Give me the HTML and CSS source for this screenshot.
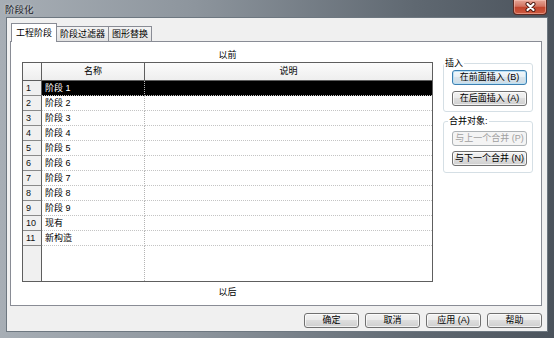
FILE: index.html
```html
<!DOCTYPE html>
<html lang="zh-CN">
  <head>
    <meta charset="UTF-8" />
    <title>阶段化</title>
    <link rel="stylesheet" href="styles.css">
  </head>
  <body>
    <div class="window">
      <div class="titlebar">
        <span class="title">阶段化</span>
        <button class="close" title="关闭">
          <svg width="13" height="10" viewBox="0 0 13 10">
            <path d="M3.5 2 L9.5 8 M9.5 2 L3.5 8" stroke="#4a1810" stroke-width="4" stroke-linecap="round" fill="none"/>
            <path d="M3.5 2 L9.5 8 M9.5 2 L3.5 8" stroke="#fff" stroke-width="2.2" stroke-linecap="round" fill="none"/>
          </svg>
        </button>
      </div>

      <div class="client">
        <div class="tabs">
          <div class="tab active">工程阶段</div>
          <div class="tab">阶段过滤器</div>
          <div class="tab">图形替换</div>
        </div>

        <div class="panel">
          <div class="main">
            <div class="caption">以前</div>
            <table class="grid">
              <colgroup>
                <col class="c-num">
                <col class="c-name">
                <col class="c-desc">
              </colgroup>
              <thead>
                <tr><th></th><th>名称</th><th>说明</th></tr>
              </thead>
              <tbody>
                <tr class="selected"><th>1</th><td>阶段 1</td><td></td></tr>
                <tr><th>2</th><td>阶段 2</td><td></td></tr>
                <tr><th>3</th><td>阶段 3</td><td></td></tr>
                <tr><th>4</th><td>阶段 4</td><td></td></tr>
                <tr><th>5</th><td>阶段 5</td><td></td></tr>
                <tr><th>6</th><td>阶段 6</td><td></td></tr>
                <tr><th>7</th><td>阶段 7</td><td></td></tr>
                <tr><th>8</th><td>阶段 8</td><td></td></tr>
                <tr><th>9</th><td>阶段 9</td><td></td></tr>
                <tr><th>10</th><td>现有</td><td></td></tr>
                <tr><th>11</th><td>新构造</td><td></td></tr>
                <tr class="filler"><th></th><td></td><td></td></tr>
              </tbody>
            </table>
            <div class="caption after">以后</div>
          </div>

          <div class="side">
            <fieldset class="group">
              <legend>插入</legend>
              <button class="btn default">在前面插入 (B)</button>
              <button class="btn">在后面插入 (A)</button>
            </fieldset>
            <fieldset class="group merge">
              <legend>合并对象:</legend>
              <button class="btn" disabled>与上一个合并 (P)</button>
              <button class="btn">与下一个合并 (N)</button>
            </fieldset>
          </div>
        </div>

        <div class="footer">
          <button class="btn">确定</button>
          <button class="btn">取消</button>
          <button class="btn">应用 (A)</button>
          <button class="btn">帮助</button>
        </div>
      </div>
    </div>
  </body>
</html>
```

FILE: styles.css
```css
html,
body {
  margin: 0;
}

body {
  width: 554px;
  height: 338px;
  overflow: hidden;
  font-family: "Liberation Sans", "Noto Sans CJK SC", sans-serif;
  font-size: 9px;
  color: #000;
}

.window {
  width: 554px;
  height: 338px;
  display: flex;
  flex-direction: column;
  background: linear-gradient(to right, #a7aeb5 0%, #8d959d 35%, #5f6871 75%, #4b535c 100%);
}

/* title bar */
.titlebar {
  height: 18px;
  flex: none;
  display: flex;
  align-items: flex-start;
  justify-content: space-between;
  padding-left: 5px;
}
.title {
  line-height: 19px;
  font-size: 9.5px;
  color: #1c2126;
  text-shadow: 0 0 3px rgba(255, 255, 255, 0.6);
}
.close {
  width: 34px;
  height: 15px;
  margin-right: 7px;
  padding: 0;
  border: 1px solid #5c2a22;
  border-top: none;
  border-radius: 0 0 4px 4px;
  background: linear-gradient(#e6a596, #d27461 45%, #c2452d 52%, #cd5a40 100%);
  box-shadow: inset 0 0 0 1px rgba(255, 210, 200, 0.45);
  display: flex;
  align-items: center;
  justify-content: center;
}

/* client area */
.client {
  flex: 1;
  margin: 0 7px 7px;
  padding: 5px 5px 0 3px;
  background: #f0f0f0;
  display: flex;
  flex-direction: column;
  box-shadow: 0 0 0 1px #6d7780;
}

.tabs {
  height: 18px;
  flex: none;
  display: flex;
  align-items: flex-end;
  padding-left: 1px;
  position: relative;
  z-index: 1;
}
.tab {
  height: 14px;
  line-height: 14px;
  padding: 0 3px;
  border: 1px solid #898c95;
  border-bottom: none;
  background: linear-gradient(#f4f4f4, #e2e2e2);
  margin-left: -1px;
}
.tab.active {
  height: 18px;
  line-height: 18px;
  padding: 0 4px;
  margin-left: 0;
  margin-bottom: -1px;
  background: #fff;
  position: relative;
  z-index: 1;
}

.panel {
  height: 265px;
  flex: none;
  box-sizing: border-box;
  border: 1px solid #898c95;
  background: #fff;
  display: flex;
  padding: 7px 0 0 11px;
}

.main {
  width: 411px;
  display: flex;
  flex-direction: column;
}
.caption {
  height: 13px;
  line-height: 13px;
  text-align: center;
}
.caption.after {
  margin-top: 4px;
  height: 12px;
  line-height: 12px;
}

/* grid */
.grid {
  width: 411px;
  table-layout: fixed;
  border-collapse: separate;
  border-spacing: 0;
  border: 1px solid #5e5e5e;
}
.c-num {
  width: 19px;
}
.c-name {
  width: 103px;
}
.grid th,
.grid td {
  padding: 0 3px;
  line-height: 14px;
  white-space: nowrap;
  overflow: hidden;
  text-align: left;
  font-weight: normal;
  border-bottom: 1px dotted #c4c4c4;
  border-right: 1px dotted #b4b4b4;
}
.grid td:last-child,
.grid th:last-child {
  border-right: none;
}
.grid thead th {
  line-height: 17px;
  text-align: center;
  background: linear-gradient(#fbfbfb, #eeeeee);
  border-bottom: 1px solid #5e5e5e;
  border-right: 1px solid #5e5e5e;
}
.grid tbody th {
  background: #f0f0f0;
  border-right: 1px solid #5e5e5e;
  border-bottom: 1px solid #8a8a8a;
  color: #111;
}
.grid .selected td {
  background: #000;
  color: #fff;
}
.grid .filler th,
.grid .filler td {
  height: 35px;
  border-bottom: none;
}

/* right side */
.side {
  width: 90px;
  margin-left: 10px;
  margin-top: 8px;
}
.group {
  margin: 0;
  padding: 1px 5px 5px 8px;
  border: 1px solid #d5dfe5;
  border-radius: 3px;
  display: flex;
  flex-direction: column;
  gap: 6px;
  min-width: 0;
}
.group legend {
  padding: 0 1px;
  margin-left: -8px;
  line-height: 12px;
}
.group.merge {
  margin-top: 3px;
  padding-top: 4px;
  padding-bottom: 6px;
  gap: 5px;
}
.group.merge legend {
  margin-left: -4px;
}

/* buttons */
.btn {
  height: 15px;
  box-sizing: border-box;
  padding: 0;
  font: inherit;
  line-height: 13px;
  color: #000;
  border: 1px solid #707070;
  border-radius: 3px;
  background: linear-gradient(#f2f2f2, #ebebeb 45%, #dddddd 50%, #cfcfcf);
  box-shadow: inset 0 0 0 1px rgba(255, 255, 255, 0.7);
}
.btn.default {
  border-color: #3c7fb1;
  background: linear-gradient(#f3f8fb, #e7eff4 45%, #d8e4ec 50%, #cddbe5);
  box-shadow: inset 0 0 0 1px #b9e0f5;
}
.btn:disabled {
  color: #a0a0a0;
  border-color: #adb2b5;
  background: #f4f4f4;
  box-shadow: none;
}

.footer {
  display: flex;
  justify-content: flex-end;
  gap: 6px;
  padding-top: 7px;
}
.footer .btn {
  width: 55px;
}
```
